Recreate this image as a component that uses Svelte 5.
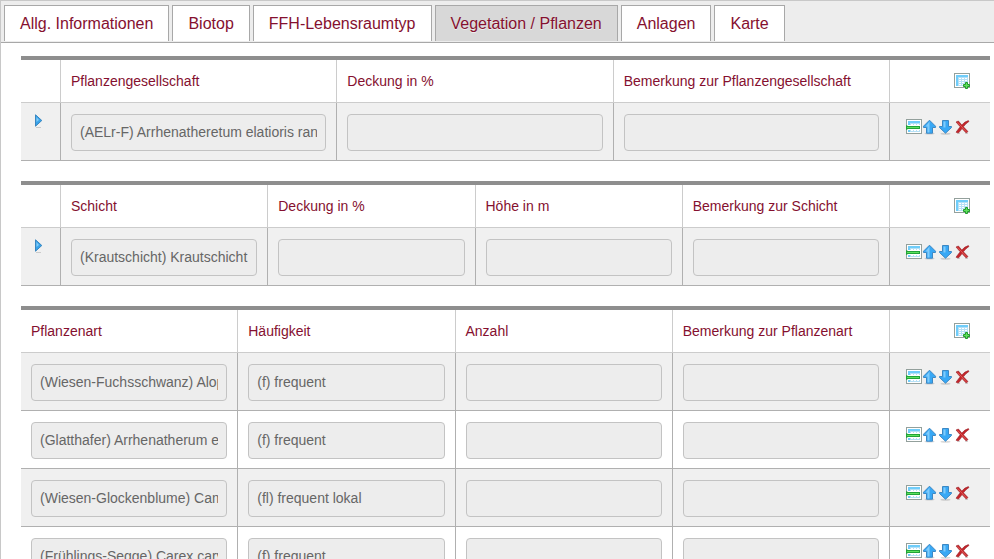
<script>
  const tabs = ["Allg. Informationen", "Biotop", "FFH-Lebensraumtyp", "Vegetation / Pflanzen", "Anlagen", "Karte"];
  let active = $state("Vegetation / Pflanzen");

  const tables = [
    {
      id: "gesellschaft",
      marker: true,
      columns: ["Pflanzengesellschaft", "Deckung in %", "Bemerkung zur Pflanzengesellschaft"],
      rows: [["(AELr-F) Arrhenatheretum elatioris ranunculetosum bulbosi", "", ""]],
    },
    {
      id: "schicht",
      marker: true,
      columns: ["Schicht", "Deckung in %", "Höhe in m", "Bemerkung zur Schicht"],
      rows: [["(Krautschicht) Krautschicht", "", "", ""]],
    },
    {
      id: "art",
      marker: false,
      columns: ["Pflanzenart", "Häufigkeit", "Anzahl", "Bemerkung zur Pflanzenart"],
      rows: [
        ["(Wiesen-Fuchsschwanz) Alopecurus pratensis", "(f) frequent", "", ""],
        ["(Glatthafer) Arrhenatherum elatius", "(f) frequent", "", ""],
        ["(Wiesen-Glockenblume) Campanula patula", "(fl) frequent lokal", "", ""],
        ["(Frühlings-Segge) Carex caryophyllea", "(f) frequent", "", ""],
      ],
    },
  ];
</script>

{#snippet sheet()}
  <rect x="0.5" y="0.5" width="15" height="14" fill="#fff" stroke="#93a09c" />
  <rect x="2" y="2" width="12" height="11" fill="#b5e0f6" />
  <path d="M2 2h12v2h-10v9h-2z" fill="#6fcdfa" />
  <path d="M5 5.5h9M5 7.5h9M5 9.5h9M5 11.5h9" stroke="#fff" stroke-dasharray="2 1" />
{/snippet}

{#snippet addIcon()}
  <svg viewBox="0 0 16 16" aria-hidden="true">
    {@render sheet()}
    <path d="M11.5 9.5h2v2h2v2h-2v2h-2v-2h-2v-2h2z" fill="#5fe05c" stroke="#219a2d" />
  </svg>
{/snippet}

{#snippet insertIcon()}
  <svg viewBox="0 0 16 16" aria-hidden="true">
    {@render sheet()}
    <path d="M2 6h12v5h-12z" fill="#fff" />
    <path d="M0 6l2 1h12v3h-12l-2 1z" fill="#22a23a" />
    <path d="M1 8h12v1h-12z" fill="#5be35c" />
  </svg>
{/snippet}

{#snippet upIcon()}
  <svg viewBox="0 0 16 16" aria-hidden="true">
    <ellipse cx="7.5" cy="14.5" rx="5" ry="1" fill="#000" opacity="0.15" />
    <path d="M7.5 1.2L13.5 7.2V8.5H10.5V14.2H4.5V8.5H1.5V7.2z" fill="#38a8f5" stroke="#3c88c4" />
    <path d="M7.5 2.5L3.5 7.5H5.5V13.5H7.5z" fill="#7fcbfb" />
  </svg>
{/snippet}

{#snippet downIcon()}
  <svg viewBox="0 0 16 16" aria-hidden="true">
    <ellipse cx="7.5" cy="14.8" rx="5" ry="1" fill="#000" opacity="0.15" />
    <path d="M7.5 14.2L1.5 8.5V7.5H4.5V1.5H10.5V7.5H13.5V8.5z" fill="#38a8f5" stroke="#3c88c4" />
    <path d="M5.5 2.5H7.5V8.5H5.5z" fill="#7fcbfb" />
  </svg>
{/snippet}

{#snippet deleteIcon()}
  <svg viewBox="0 0 16 16" aria-hidden="true">
    <path d="M3 14.5h3M11 14.5h3" stroke="#000" opacity="0.15" />
    <path d="M2 3L4.4 2L7.8 6Q10.6 2.6 14.4 1.6L15 2.4Q11.8 4.4 9.4 7.8L14 12.6L12.2 14L8 9.6Q6.4 12 4.4 14L2 13.2Q4.2 10.2 6.2 7.8z" fill="#c4242a" stroke="#99272b" stroke-width="0.6" />
    <path d="M3.6 3.4L12.4 12.8" stroke="#e8625c" stroke-width="0.8" />
  </svg>
{/snippet}

{#snippet markerIcon()}
  <svg viewBox="0 0 16 16" aria-hidden="true">
    <path d="M6 14.5h5" stroke="#000" opacity="0.15" />
    <path d="M5.5 1.8V13.2L11.8 7.5z" fill="#38a3ea" stroke="#3a86bf" />
    <path d="M6.5 4V9L9 7z" fill="#83cbf6" />
  </svg>
{/snippet}

<div class="page">
  <nav class="tabs">
    {#each tabs as tab}
      <a href="#top" class:active={tab === active} onclick={() => active = tab}>{tab}</a>
    {/each}
  </nav>

  <main>
    {#each tables as table}
      <table>
        <colgroup>
          {#if table.marker}<col class="col-marker" />{/if}
          {#each table.columns as _}<col />{/each}
          <col class="col-actions" />
        </colgroup>
        <thead>
          <tr>
            {#if table.marker}<th></th>{/if}
            {#each table.columns as column, c}
              <th id="{table.id}-{c}" scope="col">{column}</th>
            {/each}
            <th class="actions">
              <div class="icons"><button type="button" aria-label="Zeile hinzufügen">{@render addIcon()}</button></div>
            </th>
          </tr>
        </thead>
        <tbody>
          {#each table.rows as row}
            <tr>
              {#if table.marker}
                <td class="marker"><button type="button" aria-label="Zeile auswählen">{@render markerIcon()}</button></td>
              {/if}
              {#each row as value, c}
                <td><input type="text" {value} readonly aria-labelledby="{table.id}-{c}" /></td>
              {/each}
              <td class="actions">
                <div class="icons">
                  <button type="button" aria-label="Zeile einfügen">{@render insertIcon()}</button>
                  <button type="button" aria-label="Nach oben">{@render upIcon()}</button>
                  <button type="button" aria-label="Nach unten">{@render downIcon()}</button>
                  <button type="button" aria-label="Löschen">{@render deleteIcon()}</button>
                </div>
              </td>
            </tr>
          {/each}
        </tbody>
      </table>
    {/each}
  </main>
</div>

<style>
  :global(body) {
    margin: 0;
    background: #fff;
  }

  .page {
    border-top: 1px solid #c8c8c8;
    border-left: 1px solid #c8c8c8;
    font-family: "Liberation Sans", Arial, sans-serif;
    font-size: 14px;
    color: #85102f;
  }

  .tabs {
    display: flex;
    gap: 3px;
    padding: 4px 3px 1px;
    background: #ededed;
    border-bottom: 1px solid #a8a8a8;
  }

  .tabs a {
    padding: 0 15px;
    border: 1px solid #a8a8a8;
    border-bottom: 0;
    background: #fff;
    color: inherit;
    font-size: 16px;
    line-height: 35px;
    text-decoration: none;
    white-space: nowrap;
  }

  .tabs a.active {
    background: #d8d8d8;
    text-shadow: 0 1px 0 #eee;
  }

  main {
    padding: 13px 4px 0 20px;
  }

  table {
    width: 100%;
    margin-bottom: 20px;
    border-top: 4px solid #8e8e8e;
    border-spacing: 0;
    table-layout: fixed;
  }

  .col-marker {
    width: 40px;
  }

  .col-actions {
    width: 100px;
  }

  th {
    height: 42px;
    padding: 0 10px;
    border-right: 1px solid #ccc;
    border-bottom: 1px solid #ccc;
    font-weight: normal;
    text-align: left;
    white-space: nowrap;
  }

  td {
    padding: 11px 10px 9px;
    border-right: 1px solid #b0b0b0;
    border-bottom: 1px solid #b0b0b0;
    vertical-align: top;
  }

  tbody tr:nth-child(odd) {
    background: #f0f0f0;
  }

  th.actions,
  td.actions {
    padding-right: 20px;
    border-right: 0;
  }

  td.actions {
    padding-top: 16px;
  }

  td.marker {
    padding-top: 10px;
    padding-left: 9px;
  }

  input {
    display: block;
    box-sizing: border-box;
    width: 100%;
    height: 37px;
    padding: 0 8px 2px;
    border: 1px solid #c3c3c3;
    border-radius: 4px;
    background: #ededed;
    color: #666;
    font: inherit;
  }

  .icons {
    display: flex;
    justify-content: flex-end;
  }

  button {
    display: block;
    flex: none;
    width: 16px;
    height: 16px;
    padding: 0;
    border: 0;
    background: none;
    cursor: pointer;
  }

  svg {
    display: block;
    width: 16px;
    height: 16px;
  }
</style>
